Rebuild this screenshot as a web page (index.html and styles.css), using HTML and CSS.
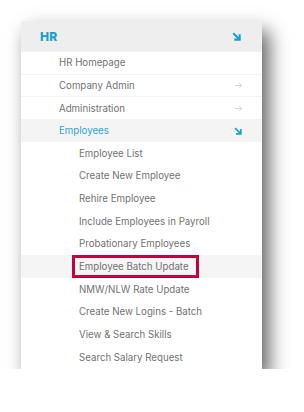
FILE: index.html
```html
<!DOCTYPE html>
<html lang="en">
<head>
  <meta charset="UTF-8">
  <meta name="viewport" content="width=device-width, initial-scale=1.0">
  <title>HR menu</title>
  <link rel="stylesheet" href="styles.css">
</head>
<body>
  <div class="menu">
    <div class="menu-head">
      <span class="head-title">HR</span>
      <svg class="icon-open" viewBox="0 0 10 10" width="9" height="9"><path d="M1.5 1.5 L7.5 7.5 M8.5 2.5 V8.5 H2.5" fill="none" stroke="#1a9fd0" stroke-width="2.4"/></svg>
    </div>

    <div class="item lvl1">HR Homepage</div>
    <div class="item lvl1">Company Admin
      <svg class="icon-go" viewBox="0 0 10 10" width="9" height="9"><path d="M1 5 H8.5 M5.5 2 L8.5 5 L5.5 8" fill="none" stroke="#cfcfcf" stroke-width="1"/></svg>
    </div>
    <div class="item lvl1">Administration
      <svg class="icon-go" viewBox="0 0 10 10" width="9" height="9"><path d="M1 5 H8.5 M5.5 2 L8.5 5 L5.5 8" fill="none" stroke="#cfcfcf" stroke-width="1"/></svg>
    </div>
    <div class="item lvl1 active">Employees
      <svg class="icon-open small" viewBox="0 0 10 10" width="8" height="8"><path d="M1.5 1.5 L7.5 7.5 M8.5 2.5 V8.5 H2.5" fill="none" stroke="#1a9fd0" stroke-width="2.2"/></svg>
    </div>

    <div class="item lvl2">Employee List</div>
    <div class="item lvl2">Create New Employee</div>
    <div class="item lvl2">Rehire Employee</div>
    <div class="item lvl2">Include Employees in Payroll</div>
    <div class="item lvl2">Probationary Employees</div>
    <div class="item lvl2 current"><span class="mark">Employee Batch Update</span></div>
    <div class="item lvl2">NMW/NLW Rate Update</div>
    <div class="item lvl2">Create New Logins - Batch</div>
    <div class="item lvl2">View &amp; Search Skills</div>
    <div class="item lvl2">Search Salary Request</div>
  </div>
</body>
</html>
```

FILE: styles.css
```css
/* ---- page ---- */
body {
  margin: 0; background: #fff;
  font-family: "Inter", "Noto Sans", sans-serif;
}

/* ---- menu card ---- */
.menu {
  margin: 21px 0 0 21px; width: 241px;
  background: #fff;
  box-shadow: 7px 10px 18px rgba(0,0,0,0.62);
}

.menu-head {
  height: 30px; background: #eeeeee;
  display: flex; align-items: center; justify-content: space-between;
  padding: 0 21px 0 19px;
}
.head-title { color: #1a9fd0; font-weight: 800; font-size: 12px; letter-spacing: 0.2px; }

/* rows */
.item {
  height: 22.7px; box-sizing: border-box;
  display: flex; align-items: center; justify-content: space-between;
  font-size: 9.7px; color: #727272;
  padding-right: 19px;
}
.lvl1 { padding-left: 38px; border-top: 1px solid #f3f3f3; }
.lvl2 { padding-left: 58px; }
.active { background: #f4f4f4; color: #29a6d6; }
.current { background: #f5f5f5; }

.icon-go, .icon-open { flex: none; }
.icon-open.small { margin-right: 1px; }

/* red highlight box */
.mark {
  display: flex; align-items: center;
  height: 23px; box-sizing: border-box;
  margin-left: -7px; padding: 0 7px 0 4px;
  border: 3px solid #c5003c;
}
```
